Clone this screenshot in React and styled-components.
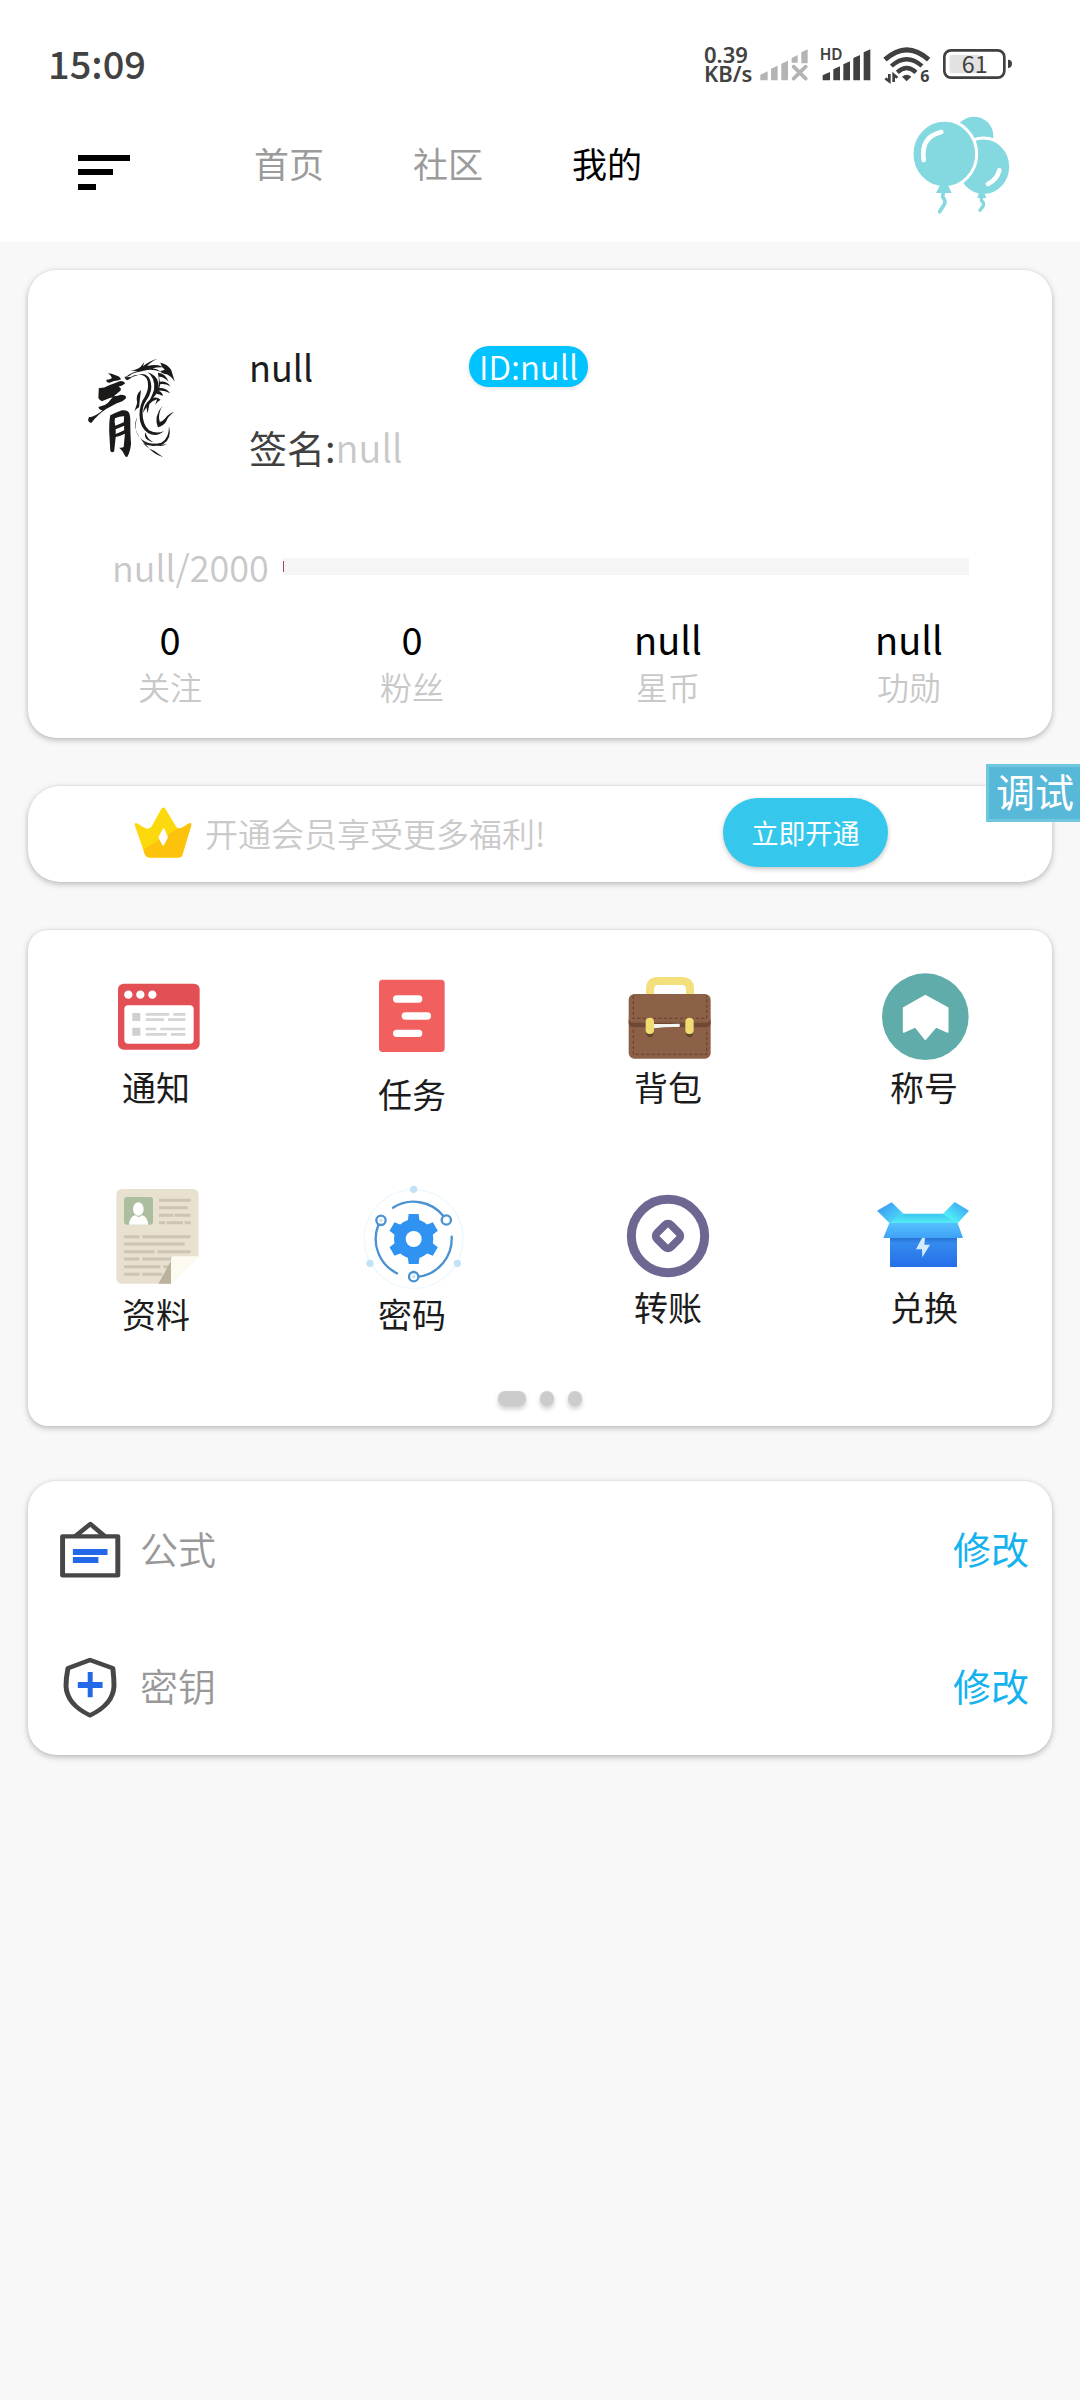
import React, { useState } from 'react';
import styled, { createGlobalStyle } from 'styled-components';

// =====================================
// Global
// =====================================

const GlobalStyle = createGlobalStyle`
  * {
    box-sizing: border-box;
  }

  body {
    margin: 0;
    background: #f8f8f8;
    color: #1c1c1c;
    font-family: "Noto Sans CJK SC", "Noto Sans", sans-serif;
  }

  button {
    margin: 0;
    padding: 0;
    border: none;
    background: none;
    color: inherit;
    font: inherit;
    cursor: pointer;
  }

  svg {
    display: block;
    flex-shrink: 0;
  }
`;

// =====================================
// Header
// =====================================

const Page = styled.div`
  position: relative;
  min-height: 100vh;
`;

const Header = styled.header`
  background: #ffffff;
  padding-top: 40px;
`;

const StatusBar = styled.div`
  display: flex;
  align-items: center;
  height: 48px;
  padding: 0 68px 0 48px;
  color: #424242;
`;

const Clock = styled.span`
  margin-right: auto;
  padding-bottom: 3px;
  font-size: 38px;
  line-height: 45px;
  font-weight: 500;
`;

const Speed = styled.span`
  display: flex;
  flex-direction: column;
  width: 56px;
  font-family: "Noto Sans", sans-serif;
  font-size: 22px;
  line-height: 19px;
  font-weight: 600;
`;

const StatusIcons = styled.div`
  display: flex;
  gap: 12px;
`;

const Nav = styled.nav`
  display: flex;
  align-items: center;
  height: 154px;
  padding: 0 70px 0 78px;
`;

const Tabs = styled.div`
  display: flex;
  gap: 89px;
  margin-left: 124px;
`;

const Tab = styled.button`
  padding-bottom: 4px;
  font-size: 35px;
  line-height: 42px;
  color: ${({ $active }) => ($active ? '#000000' : '#9b9b9b')};
`;

const BalloonButton = styled.button`
  margin-left: auto;
`;

// =====================================
// Cards
// =====================================

const Content = styled.main`
  display: flex;
  flex-direction: column;
  gap: 48px;
  padding: 28px;
`;

const Card = styled.section`
  background: #ffffff;
  border-radius: ${({ $radius }) => $radius || 28}px;
  box-shadow: 0 2px 6px rgba(0, 0, 0, 0.26), 0 0 2px rgba(0, 0, 0, 0.08);
`;

const ProfileCard = styled(Card)`
  padding: 76px 38px 34px 20px;
`;

const Profile = styled.div`
  display: flex;
  gap: 70px;
  padding-left: 37px;
`;

const ProfileInfo = styled.div`
  display: flex;
  flex-direction: column;
  gap: 41px;
`;

const NameRow = styled.div`
  display: flex;
`;

const Name = styled.span`
  width: 220px;
  font-size: 36px;
  line-height: 40px;
`;

const IdBadge = styled.span`
  padding: 0 10px;
  border-radius: 20px;
  background: #00c3ff;
  box-shadow: 0 1px 4px rgba(0, 0, 0, 0.14);
  color: #ffffff;
  font-size: 33px;
  line-height: 41px;
  font-weight: 350;
`;

const Signature = styled.p`
  margin: 0;
  font-size: 38px;
  line-height: 38px;
  color: #404040;

  span {
    color: #c8c8c8;
    font-weight: 350;
  }
`;

const LevelRow = styled.div`
  display: flex;
  align-items: center;
  gap: 12px;
  margin-top: 82px;
  padding: 0 45px 0 64px;
`;

const LevelText = styled.span`
  min-width: 159px;
  font-size: 36px;
  line-height: 36px;
  font-weight: 350;
  color: #c8c8c8;
`;

const LevelBar = styled.div`
  flex: 1;
  display: flex;
  align-items: center;
  height: 17px;
  background: #f5f5f5;
`;

const LevelFill = styled.div`
  width: 1px;
  height: 11px;
  background: #b0405a;
`;

const Stats = styled.div`
  display: grid;
  grid-template-columns: 244fr 240fr 272fr 210fr;
  margin-top: 35px;
`;

const Stat = styled.button`
  display: flex;
  flex-direction: column;
  align-items: center;
  gap: 9px;
`;

const StatValue = styled.span`
  font-size: 38px;
  line-height: 40px;
  color: #000000;
`;

const StatLabel = styled.span`
  font-size: 32px;
  line-height: 36px;
  font-weight: 350;
  color: #c8c8c8;
`;

const VipCard = styled(Card)`
  display: flex;
  align-items: center;
  height: 96px;
  padding: 0 164px 3px 106px;
`;

const VipText = styled.span`
  margin-left: 13px;
  font-size: 33px;
  line-height: 40px;
  font-weight: 350;
  color: #cbc9c9;
`;

const VipButton = styled.button`
  width: 165px;
  height: 69px;
  margin-left: auto;
  padding-bottom: 1px;
  border-radius: 35px;
  background: #35c8ec;
  box-shadow: 0 2px 5px rgba(0, 0, 0, 0.24);
  color: #ffffff;
  font-size: 27px;
`;

const MenuCard = styled(Card)`
  padding: 36px 0 20px;
`;

const MenuGrid = styled.div`
  display: grid;
  grid-template-columns: repeat(4, 1fr);
  row-gap: 69px;
`;

const MenuItem = styled.button`
  display: flex;
  flex-direction: column;
  align-items: center;
  justify-content: flex-start;
  padding-bottom: 2px;
  font-size: 34px;
  line-height: 34px;
`;

const Dots = styled.div`
  display: flex;
  justify-content: center;
  gap: 14px;
  margin-top: 58px;
`;

const Dot = styled.span`
  width: ${({ $active }) => ($active ? 28 : 14)}px;
  height: 15px;
  border-radius: 7px;
  background: #cccccc;
  box-shadow: 0 3px 5px rgba(0, 0, 0, 0.2);
`;

const SettingsCard = styled(Card)`
  margin-top: 7px;
`;

const SettingRow = styled.div`
  display: flex;
  align-items: center;
  height: 137px;
  padding: 0 23px 0 30px;
`;

const SettingName = styled.span`
  margin-left: 18px;
  padding-bottom: 4px;
  font-size: 38px;
  line-height: 42px;
  font-weight: 350;
  color: #999999;
`;

const EditButton = styled.button`
  margin-left: auto;
  padding-bottom: 4px;
  font-size: 38px;
  line-height: 42px;
  color: #14b2ee;
`;

const DebugButton = styled.button`
  position: absolute;
  top: 764px;
  right: 0;
  height: 58px;
  padding: 0 6px 6px 7px;
  border: 3px solid #70c8e0;
  border-right: none;
  background: #58b8d8;
  color: #ffffff;
  font-size: 39px;
  line-height: 46px;
`;

// =====================================
// Icons
// =====================================

const SignalOff = () => (
  <svg width="48" height="48" viewBox="243 60 144 144" fill="#b4b4b4">
    <path d="M244 164l22-10v27h-22zM276 146l20-9v44h-20zM307 131l20-9v59h-20zM338 114l18-9v23h-18zM367 97l19-9v42h-19z" />
    <path d="M344 140l36 36M380 140l-36 36" stroke="#b4b4b4" strokeWidth="11" strokeLinecap="round" />
  </svg>
);

const SignalHd = () => (
  <svg width="51" height="48" viewBox="416 60 153 144" fill="#404040">
    <text x="415" y="120" fontSize="46" fontWeight="600" fontFamily="Noto Sans, sans-serif">HD</text>
    <path d="M424 166l22-10v25h-22zM456 148l20-9v42h-20zM486 133l20-9v57h-20zM516 114l20-9v76h-20zM547 97l20-9v93h-20z" />
  </svg>
);

const Wifi = () => (
  <svg width="48" height="48" viewBox="603 60 144 144" fill="none" stroke="#404040">
    <path d="M609 119Q674 60 740 119" strokeWidth="15" />
    <path d="M628 138Q674 97 720 138" strokeWidth="13" />
    <path d="M646 157Q674 131 702 157" strokeWidth="13" />
    <path d="M660 170q14-12 28 0l-14 14z" fill="#404040" stroke="none" />
    <path d="M622 162v22l-12-9M635 186v-22l11 9" strokeWidth="8" />
    <text x="715" y="186" fontSize="48" fontWeight="700" fontFamily="Noto Sans, sans-serif" fill="#404040" stroke="none">6</text>
  </svg>
);

const Battery = () => (
  <svg width="69" height="48" viewBox="789 60 207 144">
    <rect x="809" y="104" width="92" height="56" rx="8" fill="#e2e2e2" />
    <rect x="793" y="91" width="180" height="82" rx="20" fill="none" stroke="#404040" strokeWidth="8" />
    <path d="M984 119q12 0 12 12t-12 13z" fill="#404040" />
    <text x="884" y="158" textAnchor="middle" fontSize="70" fontFamily="Noto Sans CJK SC, sans-serif" fill="#404040">61</text>
  </svg>
);

const MenuIcon = () => (
  <svg width="52" height="50" viewBox="0 0 52 50">
    <path d="M0 15h52v6H0zM0 29h35v6H0zM0 44h18v6H0z" />
  </svg>
);

const Balloons = () => (
  <svg width="97" height="98" viewBox="698 291 291 294">
    <g fill="#84d8e0">
      <circle cx="881" cy="351" r="58" />
      <ellipse cx="910" cy="443" rx="81" ry="86" stroke="#fff" strokeWidth="9" />
      <path d="M897 518h14l7 19h-27z" />
      <ellipse cx="792" cy="405" rx="97" ry="101" stroke="#fff" strokeWidth="9" />
      <path d="M779 498h24l11 24h-47z" />
    </g>
    <g fill="none" stroke="#84d8e0" strokeLinecap="round" strokeLinejoin="round">
      <path d="M789 520l-2 14q9 9 6 20l-15 24" strokeWidth="11" />
      <path d="M904 536l-1 9q9 6 6 15l-10 14" strokeWidth="10" />
    </g>
    <path d="M730 423q-10-69 53-84M957 454q-7 27-34 41" fill="none" stroke="#fff" strokeWidth="14" strokeLinecap="round" />
  </svg>
);

const DragonLogo = () => (
  <svg width="94" height="120" viewBox="170 258 245 360" preserveAspectRatio="none" fill="#1b1a18">
    {/* brush strokes */}
    <path d="M230 340q10 0 18 5 12 3 16 13-8 5-18 5l-12 5q-10-1-8-9 12-2 14-6-3-8-10-13z" />
    <path d="M206 384q14 1 24-7l32-14q12 0 12 8-9 7-17 9 10 4 5 12l-17 17q12-2 18-5 16 1 14 10-8 11-24 16l-28 17q-20 15-38 41-7 2-9-8l2-8q16-1 36-21-10-1-11-10l8-3q8-1 17-10l12-16q-20 7-27 12-12-6-10-15z" />
    <path d="M236 466q14-8 30-15 16-2 20 10l2 14q0 50 2 76-2 24-10 40-5 1-7-6-3-12-14-22 10 1 12-3l3-39q-14 8-24 10l-4 43q-5 6-10-1l-3-60q0-33 3-47zM248 475q-2 13 1 22l22-10 1-18q-10-1-24 6zM250 508v14q14-6 22-11v-14z" fillRule="evenodd" />
    {/* head and mane */}
    <path d="M277 350q16-14 31-17l-20-1q18-3 27-12l10-15-4 14q17-17 38-23-20 11-27 22 17-5 29-2l15 6q-18-1-30 3 14 2 22 11-18-8-36-6l-32 8q-9 3-15 10l-8 4 12-1q9-7 22-7l-18 7-11 9q-7 0-9-10z" />
    {/* body */}
    <path d="M306 344q20-7 30 8 9 16 6 39-3 17-13 32-9 15-9 36 0 35 17 52 20 12 39 2-20 21-42 6-22-18-22-54 0-33 14-55 10-20 8-40-1-16-10-22-8-5-18-4z" />
    <path d="M333 337q24 8 28 31 4 26-13 45l-15 20q12-26 17-44 4-35-17-52z" />
    {/* wing and spines */}
    <path d="M366 308q20 4 29 23l9 34q-9-16-21-22-12-1-17-9l12-5q-9-9-12-21z" />
    <path d="M360 338q20 2 28 27-14-16-25-15l2 15q18-3 28 14-15-9-27-6l-2 11q19 0 28 16-16-10-30-8 11 6 11 16-9-6-17-7 11-28 4-63z" />
    <path d="M367 419q-8 5-14 16l5-17q-12 3-20 14l-5 28-3-18-9 16q3-25 17-38 15-14 29-1z" />
    {/* legs, tail */}
    <path d="M316 390q-15 14-10 39l-7 25q4-8 12-12 2-26 5-52zM372 437q-14 27-7 49 7-2 13-10 12-17 24-20-16 13-21 30-7 12-21 16-12-32 12-65z" />
    <path d="M306 472q-12 47 13 67 21 18 50 9 20-12 20-50 8 38-15 54-30 14-53-3 13 17 29 23l24 20q-27-10-42-34-24-25-31-55-1-19 5-31zM348 550q18 8 36 1-20 15-36-1zM328 517q2 18 20 30-28-8-20-30z" />
  </svg>
);

const Crown = () => (
  <svg width="58" height="53" viewBox="320 168 162 160" preserveAspectRatio="none">
    <defs>
      <clipPath id="crown">
        <path d="M322 226q-1-10 8-5 20 15 27 16 9-1 13-9l26-51q6-9 12 0l29 52q4 7 10 7 7-1 26-15 9-4 7 5l-25 90q-2 8-12 8h-79q-9 0-13-8z" />
      </clipPath>
    </defs>
    <g clipPath="url(#crown)">
      <path d="M315 165h170v165H315z" fill="#fcd90c" />
      <path d="M315 320L490 205v130H315z" fill="#fcc20c" />
    </g>
    <path d="M401 236q2-2 4 1l10 25-11 24q-3 3-5 0l-11-24z" fill="#fff" />
  </svg>
);

const NoticeIcon = () => (
  <svg width="104" height="104" viewBox="72 48 312 312">
    <rect x="114" y="101" width="245" height="198" rx="17" fill="#e24f55" />
    <g fill="#fff">
      <circle cx="145" cy="134" r="12.5" />
      <circle cx="181" cy="134" r="12.5" />
      <circle cx="217" cy="134" r="12.5" />
      <rect x="133" y="166" width="208" height="115" rx="12" />
    </g>
    <path d="M157 189h24v24h-24zM157 233h24v24h-24z" fill="#cfcfcf" />
    <path d="M197 193h71M280 193h36M197 209h55M264 209h52M197 237h32M241 237h75M197 253h64M273 253h43" stroke="#d5d5d5" strokeWidth="8" />
  </svg>
);

const TaskIcon = () => (
  <svg width="104" height="111" viewBox="840 48 312 333">
    <rect x="897" y="89" width="197" height="217" rx="11" fill="#f25f5f" />
    <path d="M950 147h66M976 198h66M950 250h66" stroke="#fff" strokeWidth="22" strokeLinecap="round" />
  </svg>
);

const BagIcon = () => (
  <svg width="104" height="104" viewBox="48 48 312 312">
    <path d="M150 136v-18q0-25 25-25h70q25 0 25 25v18" fill="none" stroke="#f3e07c" strokeWidth="24" />
    <rect x="86" y="132" width="246" height="194" rx="17" fill="#8c6147" />
    <path d="M86 206q2 12 15 12h216q13 0 15-12v14q-2 12-15 12H101q-13 0-15-12z" fill="#6f4935" />
    <path d="M100 137v68h220v-68M100 240v73h220v-73" fill="none" stroke="#6c4633" strokeWidth="4" strokeDasharray="9 7" />
    <path d="M160 222q40 1 78-1 4 4 0 10-40-1-76 4z" fill="#f4f4f2" />
    <path d="M138 245h23v4q-2 13-12 13-10-1-11-13zM257 245h23v4q-2 13-12 13-10-1-11-13z" fill="#604a2c" />
    <rect x="137" y="203" width="25" height="49" rx="12" fill="#f1dc74" />
    <rect x="256" y="203" width="25" height="49" rx="12" fill="#f1dc74" />
  </svg>
);

const TitleIcon = () => (
  <svg width="104" height="104" viewBox="816 48 312 312">
    <circle cx="976" cy="200" r="130" fill="#60acab" />
    <path d="M976 137l67 37v72l-35-16-32 38-30-38-35 16v-72z" fill="#fff" stroke="#fff" strokeWidth="5" strokeLinejoin="round" />
  </svg>
);

const ResumeIcon = () => (
  <svg width="104" height="115" viewBox="72 66 312 345">
    <path d="M127 87h211q18 0 18 18v184l-83 82H127q-18 0-18-18V105q0-18 18-18z" fill="#e9e1cf" />
    <rect x="132" y="111" width="87" height="83" rx="9" fill="#abbfa0" />
    <path d="M147 194q3-27 20-28 9 10 18 0 16 1 20 28z" fill="#fff" />
    <ellipse cx="175" cy="147" rx="16" ry="20" fill="#fff" />
    <path
      d="M237 121h95M237 143h86M237 166h42M283 166h49M237 188h18M260 188h49M314 188h18M132 230h46M187 230h145M132 252h182M132 275h91M232 275h100M132 297h46M187 297h90M132 320h109M250 320h23M132 343h46M187 343h60"
      stroke="#cdc5b3"
      strokeWidth="9"
    />
    <path d="M273 303v68h-38z" fill="#bab29f" />
    <path d="M273 371v-73q0-9 9-9h74z" fill="#fdfaf0" />
  </svg>
);

const PasswordIcon = () => (
  <svg width="104" height="115" viewBox="840 66 312 345">
    <circle cx="1001" cy="237" r="148" fill="none" stroke="#eef8fe" strokeWidth="4" />
    <g fill="#c3e2f7">
      <circle cx="1001" cy="88" r="11" />
      <circle cx="870" cy="310" r="11" />
      <circle cx="1132" cy="310" r="11" />
    </g>
    <g fill="none" stroke="#4a92d2" strokeWidth="7" strokeLinecap="round">
      <path d="M939 143A115 115 0 0 1 1090 168" />
      <path d="M895 195A115 115 0 0 0 951 340" />
      <path d="M1115 230A115 115 0 0 1 1017 350" />
      <circle cx="1099" cy="180" r="14" />
      <circle cx="903" cy="181" r="14" />
      <circle cx="1001" cy="350" r="14" />
    </g>
    <circle cx="903" cy="181" r="5" fill="#c3e2f7" />
    <circle cx="1001" cy="350" r="5" fill="#c3e2f7" />
    <g fill="#3093f2">
      <circle cx="1001" cy="237" r="59" />
      <path id="tooth" d="M986 162h30l3 24q2 8 8 10v82q-6 2-8 10l-3 24h-30l-3-24q-2-8-8-10v-82q6-2 8-10z" />
      <use href="#tooth" transform="rotate(60 1001 237)" />
      <use href="#tooth" transform="rotate(120 1001 237)" />
    </g>
    <circle cx="1001" cy="237" r="24" fill="#fff" />
  </svg>
);

const TransferIcon = () => (
  <svg width="104" height="108" viewBox="48 66 312 324" fill="none" stroke="#6e6792">
    <circle cx="204" cy="228" r="110" strokeWidth="27" />
    <rect x="174" y="198" width="60" height="60" rx="13" strokeWidth="23" transform="rotate(45 204 228)" />
  </svg>
);

const ExchangeIcon = () => (
  <svg width="104" height="108" viewBox="816 66 312 324">
    <defs>
      <linearGradient id="flapLeft" x1="0" y1="0" x2="1" y2="1">
        <stop offset="0.2" stopColor="#3d9ff4" />
        <stop offset="1" stopColor="#4feaf6" />
      </linearGradient>
      <linearGradient id="flapRight" x1="1" y1="0" x2="0" y2="1">
        <stop offset="0.1" stopColor="#3d9ff4" />
        <stop offset="0.7" stopColor="#4feaf6" />
      </linearGradient>
      <linearGradient id="inside" x1="0" y1="0" x2="0" y2="1">
        <stop offset="0" stopColor="#3cc4f2" />
        <stop offset="1" stopColor="#56eef4" />
      </linearGradient>
      <linearGradient id="lip" x1="0" y1="0" x2="0" y2="1">
        <stop offset="0" stopColor="#55c0fd" />
        <stop offset="1" stopColor="#3fa2f8" />
      </linearGradient>
      <linearGradient id="front" x1="0" y1="0" x2="0" y2="1">
        <stop offset="0" stopColor="#2670cf" />
        <stop offset="0.2" stopColor="#348bee" />
        <stop offset="1" stopColor="#256ee9" />
      </linearGradient>
    </defs>
    <path d="M868 190l42-29h120l44 29z" fill="url(#inside)" />
    <path d="M831 152l44-25 36 35-42 28z" fill="url(#flapLeft)" />
    <path d="M1028 162l36-36 43 26-34 38z" fill="url(#flapRight)" />
    <path d="M870 232h201v89H870z" fill="url(#front)" />
    <path d="M868 189h205l16 45H850z" fill="url(#lip)" />
    <path d="M966 234h9l-2 20h17l-23 38-1-24h-18z" fill="#d4ebff" />
  </svg>
);

const FormulaIcon = () => (
  <svg width="64" height="60" viewBox="100 450 168 180" preserveAspectRatio="none">
    <g fill="none" stroke="#474747" strokeWidth="13" strokeLinejoin="round">
      <rect x="112" y="499" width="145" height="117" />
      <path d="M145 499l40-37 38 37" />
    </g>
    <path d="M139 537h91v18h-91zM139 561h67v18h-67z" fill="#2468ea" />
  </svg>
);

const KeyIcon = () => (
  <svg width="64" height="62" viewBox="100 858 168 186" preserveAspectRatio="none">
    <path
      d="M184 870l60 25q3 30 3 53-2 55-63 88-61-33-63-88 0-23 5-53z"
      fill="none"
      stroke="#474747"
      strokeWidth="13"
      strokeLinejoin="round"
    />
    <path d="M178 906h13v30h26v18h-26v28h-13v-28h-26v-18h26z" fill="#2468ea" />
  </svg>
);

// =====================================
// Data
// =====================================

const tabs = ['首页', '社区', '我的'];

const stats = [
  { label: '关注', value: '0' },
  { label: '粉丝', value: '0' },
  { label: '星币', value: 'null' },
  { label: '功勋', value: 'null' },
];

const menuItems = [
  { label: '通知', Icon: NoticeIcon },
  { label: '任务', Icon: TaskIcon },
  { label: '背包', Icon: BagIcon },
  { label: '称号', Icon: TitleIcon },
  { label: '资料', Icon: ResumeIcon },
  { label: '密码', Icon: PasswordIcon },
  { label: '转账', Icon: TransferIcon },
  { label: '兑换', Icon: ExchangeIcon },
];

const settings = [
  { label: '公式', Icon: FormulaIcon },
  { label: '密钥', Icon: KeyIcon },
];

const App = () => {
  const [activeTab, setActiveTab] = useState('我的');

  return (
    <Page>
      <GlobalStyle />

      <Header>
        <StatusBar>
          <Clock>15:09</Clock>
          <Speed>
            <span>0.39</span>
            <span>KB/s</span>
          </Speed>
          <StatusIcons>
            <SignalOff />
            <SignalHd />
            <Wifi />
            <Battery />
          </StatusIcons>
        </StatusBar>
        <Nav>
          <button aria-label="菜单">
            <MenuIcon />
          </button>
          <Tabs>
            {tabs.map((tab) => (
              <Tab key={tab} $active={tab === activeTab} onClick={() => setActiveTab(tab)}>
                {tab}
              </Tab>
            ))}
          </Tabs>
          <BalloonButton aria-label="活动">
            <Balloons />
          </BalloonButton>
        </Nav>
      </Header>

      <Content>
        <ProfileCard>
          <Profile>
            <DragonLogo />
            <ProfileInfo>
              <NameRow>
                <Name>null</Name>
                <IdBadge>ID:null</IdBadge>
              </NameRow>
              <Signature>
                签名:<span>null</span>
              </Signature>
            </ProfileInfo>
          </Profile>
          <LevelRow>
            <LevelText>null/2000</LevelText>
            <LevelBar>
              <LevelFill />
            </LevelBar>
          </LevelRow>
          <Stats>
            {stats.map(({ label, value }) => (
              <Stat key={label}>
                <StatValue>{value}</StatValue>
                <StatLabel>{label}</StatLabel>
              </Stat>
            ))}
          </Stats>
        </ProfileCard>

        <VipCard $radius={32}>
          <Crown />
          <VipText>开通会员享受更多福利!</VipText>
          <VipButton>立即开通</VipButton>
        </VipCard>

        <MenuCard $radius={20}>
          <MenuGrid>
            {menuItems.map(({ label, Icon }) => (
              <MenuItem key={label}>
                <Icon />
                <span>{label}</span>
              </MenuItem>
            ))}
          </MenuGrid>
          <Dots>
            <Dot $active />
            <Dot />
            <Dot />
          </Dots>
        </MenuCard>

        <SettingsCard>
          {settings.map(({ label, Icon }) => (
            <SettingRow key={label}>
              <Icon />
              <SettingName>{label}</SettingName>
              <EditButton aria-label={`修改${label}`}>修改</EditButton>
            </SettingRow>
          ))}
        </SettingsCard>
      </Content>

      <DebugButton>调试</DebugButton>
    </Page>
  );
};

export default App;
